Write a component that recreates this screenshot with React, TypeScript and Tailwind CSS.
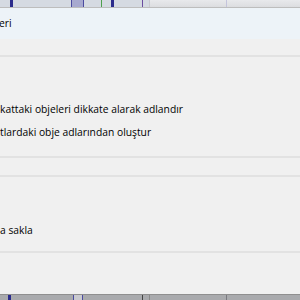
import React from 'react';

const font = { fontFamily: '"Open Sans", "Noto Sans", "DejaVu Sans", sans-serif' };

const Divider: React.FC = () => <div className="h-[2px] bg-[#e2e2e2]" />;

const TopStrip: React.FC = () => (
    <div className="relative h-[8px] bg-gradient-to-b from-[#e8e9ec] to-[#dcdde0] border-b border-[#bdbdbd]">
        <div className="absolute left-0 top-0 h-full w-[149px] bg-[#d5dae2]" />
        <div className="absolute left-[10px] top-0 h-full w-[3px] bg-[#2c2c8c]" />
        <div className="absolute left-[71px] top-0 h-full w-[13px] bg-[#a7a9cf] border-x border-[#4b4ba0]" />
        <div className="absolute left-[101px] top-0 h-full w-px bg-[#4ea04e]" />
        <div className="absolute left-[111px] top-0 h-full w-[3px] bg-[#2c2c8c]" />
        <div className="absolute left-[142px] top-0 h-full w-px bg-[#6a4ca0]" />
        <div className="absolute left-[149px] top-0 h-full w-px bg-[#c8c8d0]" />
        <div className="absolute left-[226px] top-0 h-full w-px bg-[#c4c4dc]" />
    </div>
);

const BottomStrip: React.FC = () => (
    <div className="relative h-[6px] bg-[#a9aaad] border-t border-[#8f8f8f]">
        <div className="absolute left-[8px] top-0 h-full w-[3px] bg-[#2c2c8c]" />
        <div className="absolute left-[73px] top-0 h-full w-[10px] bg-[#c9c9cf] border-x border-[#4b4ba0]" />
        <div className="absolute left-[142px] top-0 h-full w-px bg-[#444]" />
        <div className="absolute left-[149px] top-0 h-full w-px bg-[#8a8a8a]" />
        <div className="absolute left-[226px] top-0 h-full w-px bg-[#7a7a80]" />
    </div>
);

const App: React.FC = () => (
    <div className="w-[300px] h-[300px] overflow-hidden flex flex-col bg-[#f0f0f0] text-black text-[10.3px]" style={font}>
        <TopStrip />
        <div className="h-[31px] bg-[#edf3f8] flex items-center whitespace-nowrap">
            <span className="-ml-[1px]">eri</span>
        </div>
        <div className="h-[16px]" />
        <Divider />
        <div className="h-[45px]" />
        <div className="flex flex-col gap-[8px] whitespace-nowrap">
            <span className="leading-[15px]">kattaki objeleri dikkate alarak adlandır</span>
            <span className="leading-[15px]">tlardaki obje adlarından oluştur</span>
        </div>
        <div className="h-[16px]" />
        <Divider />
        <div className="h-[17px]" />
        <Divider />
        <div className="h-[46px]" />
        <span className="leading-[15px] whitespace-nowrap">a sakla</span>
        <div className="h-[13px]" />
        <Divider />
        <div className="flex-1" />
        <BottomStrip />
    </div>
);

export default App;
